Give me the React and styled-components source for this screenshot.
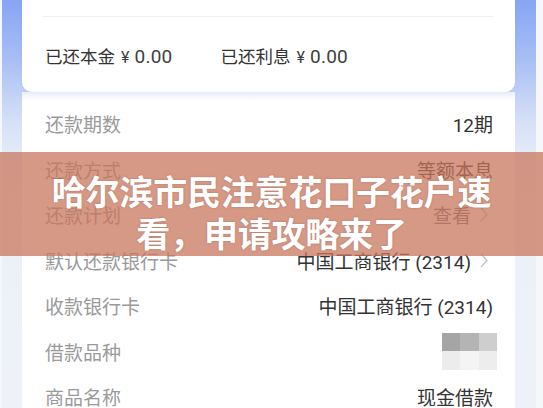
import React from "react";
import styled, { createGlobalStyle } from "styled-components";

const GlobalStyle = createGlobalStyle`
  html, body {
    margin: 0;
    padding: 0;
    background: #ffffff;
  }
  body {
    font-family: Roboto, "Noto Sans CJK SC", sans-serif;
  }
`;

const Page = styled.div`
  position: relative;
  width: 543px;
  height: 408px;
  overflow: hidden;
  background: #f6f7fa;
`;

const Phone = styled.div`
  margin-left: 2px;
  width: 534px;
  height: 408px;
  box-sizing: border-box;
  padding: 0 21px 0 20px;
  background: linear-gradient(
    180deg,
    #86a5f3 0%,
    #a9c0f5 15%,
    #d6e1f7 30%,
    #ebf0f8 42%,
    #eef2f8 100%
  );
  display: flex;
  flex-direction: column;
`;

const SummaryCard = styled.div`
  position: relative;
  z-index: 1;
  background: #ffffff;
  border-radius: 0 0 10px 10px;
  box-shadow: 0 2px 5px rgba(140, 165, 225, 0.1);
  padding-top: 16px;
  height: 92px;
  box-sizing: border-box;
`;

const Divider = styled.div`
  height: 1px;
  margin: 0 22px 0 21px;
  background: #eeeff2;
`;

const RepaidRow = styled.div`
  display: flex;
  align-items: center;
  gap: 48px;
  height: 78px;
  padding: 0 0 2px 23px;
  box-sizing: border-box;
  color: #333333;
`;

const Repaid = styled.span`
  display: flex;
  align-items: baseline;
  font-size: 17.5px;
`;

const Amount = styled.span`
  margin-left: 6px;
  font-size: 19px;
  color: #404040;
  letter-spacing: 0.2px;
  &::before {
    content: "¥";
    font-size: 16px;
    margin-right: 5px;
  }
`;

const DetailCard = styled.div`
  flex: 1;
  background: linear-gradient(180deg, #eef2fb 0px, #f8f9fd 5px, #ffffff 10px);
  padding: 9px 22px 0 23px;
`;

const Row = styled.div`
  display: flex;
  align-items: center;
  justify-content: space-between;
  height: 45.5px;
  font-size: 19px;
`;

const Label = styled.span`
  color: #9a9a9a;
`;

const Value = styled.span`
  display: flex;
  align-items: center;
  gap: 9px;
  color: ${(p) => (p.$muted ? "#6f6f7a" : "#333333")};
  margin-right: ${(p) => (p.$arrow ? "5px" : "0")};
`;

const Mosaic = styled.div`
  display: grid;
  grid-template-columns: repeat(3, 18.5px);
  grid-template-rows: repeat(2, 18.5px);
  margin-right: -4px;
`;

const Tile = styled.div`
  background: ${(p) => p.$c};
`;

const Chevron = () => (
  <svg width="8" height="15" viewBox="0 0 8 15" fill="none">
    <path d="M1 1l6 6.5L1 14" stroke="#c4c4c4" strokeWidth="1.4" />
  </svg>
);

const Banner = styled.div`
  position: absolute;
  z-index: 2;
  left: 0;
  right: 0;
  top: 152px;
  height: 104px;
  box-sizing: border-box;
  padding: 18px 50px 0;
  background: rgba(200, 118, 92, 0.74);
  text-align: center;
`;

const Title = styled.h1`
  margin: 0;
  font-family: "Noto Sans CJK SC", sans-serif;
  font-weight: 700;
  font-size: 34px;
  line-height: 41.5px;
  color: #ffffff;
  letter-spacing: -0.2px;
  text-shadow: 0 0 2px rgba(90, 40, 30, 0.35);
`;

const details = [
  { label: "还款期数", value: "12期" },
  { label: "还款方式", value: "等额本息" },
  { label: "还款计划", value: "查看", arrow: true, muted: true },
  { label: "默认还款银行卡", value: "中国工商银行 (2314)", arrow: true },
  { label: "收款银行卡", value: "中国工商银行 (2314)" },
  { label: "借款品种", mosaic: true },
  { label: "商品名称", value: "现金借款" },
];

const tiles = ["#a5a5a5", "#b4b4b4", "#cecece", "#ececec", "#f4f4f4", "#ededed"];

export default function App() {
  return (
    <>
      <GlobalStyle />
      <Page>
        <Phone>
          <SummaryCard>
            <Divider />
            <RepaidRow>
              <Repaid>
                已还本金<Amount>0.00</Amount>
              </Repaid>
              <Repaid>
                已还利息<Amount>0.00</Amount>
              </Repaid>
            </RepaidRow>
          </SummaryCard>
          <DetailCard>
            {details.map((d) => (
              <Row key={d.label}>
                <Label>{d.label}</Label>
                {d.mosaic ? (
                  <Mosaic>
                    {tiles.map((c, i) => (
                      <Tile key={i} $c={c} />
                    ))}
                  </Mosaic>
                ) : (
                  <Value $muted={d.muted} $arrow={d.arrow}>
                    {d.value}
                    {d.arrow && <Chevron />}
                  </Value>
                )}
              </Row>
            ))}
          </DetailCard>
        </Phone>
        <Banner>
          <Title>哈尔滨市民注意花口子花户速看，申请攻略来了</Title>
        </Banner>
      </Page>
    </>
  );
}
